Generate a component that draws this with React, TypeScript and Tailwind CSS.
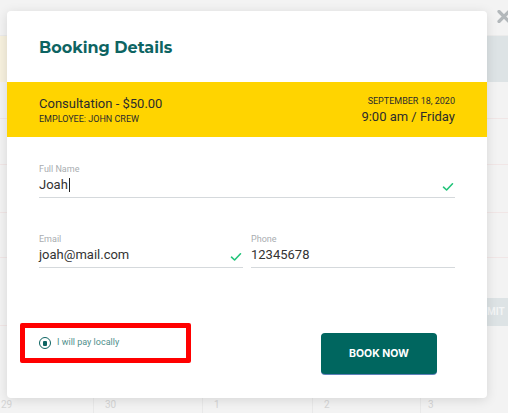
import React from 'react';

function Check() {
  return (
    <svg width="12" height="10" viewBox="0 0 12 10" fill="none" className="shrink-0 mt-[4px]">
      <path d="M1.5 5.2 4.6 8 10.5 1.8" stroke="#22c47a" strokeWidth="1.6" strokeLinecap="round" strokeLinejoin="round" />
    </svg>
  );
}

function Field({ label, value, check, caret }: { label: string; value: string; check?: boolean; caret?: boolean }) {
  return (
    <div className="flex flex-col flex-1 min-w-0">
      <span className="text-[9px] leading-[11px] text-[#a9adb0]">{label}</span>
      <div className="flex items-center justify-between h-[23px] border-b border-[#d5d9dc] pr-[1px] pb-[2px]">
        <span className="text-[13px] text-[#333] flex items-center">
          {value}
          {caret && <span className="inline-block w-[1px] h-[14px] bg-[#222] ml-[1px]" />}
        </span>
        {check && <Check />}
      </div>
    </div>
  );
}

export default function App() {
  return (
    <div className="relative w-[508px] h-[413px] overflow-hidden bg-[#f3f3f3]" style={{ fontFamily: 'Roboto, "Noto Sans", sans-serif' }}>
      {/* Page behind the modal, faded */}
      <div className="flex flex-col h-full">
        <div className="h-[36px] border-b border-[#ebebeb]" />
        <div className="h-[46px] flex">
          <div className="w-[7px] bg-[#f7f1de]" />
          <div className="flex-1" />
          <div className="w-[21px] bg-[#dde3e5]" />
        </div>
        <div className="flex-1 flex flex-col">
          <div className="h-[37px] border-b border-[#f1e6e6]" />
          <div className="h-[46px] border-b border-[#f1e6e6]" />
          <div className="h-[48px] border-b border-[#f1e6e6]" />
          <div className="h-[45px] border-b border-[#f1e6e6]" />
          <div className="h-[40px]" />
          <div className="h-[28px] border-b border-[#f1e6e6] flex justify-end items-center">
            <div className="w-[21px] h-[28px] bg-[#dde3e5] text-[#f3f5f6] text-[10px] font-bold flex items-center">MIT</div>
          </div>
          <div className="flex-1" />
        </div>
        <div className="h-[22px] flex text-[#d5d5d5] text-[10px]">
          <div className="w-[94px] border-r border-[#e9e9e9] pl-[1px] pt-[6px]">29</div>
          <div className="w-[109px] border-r border-[#e9e9e9] pl-[11px] pt-[6px]">30</div>
          <div className="w-[110px] border-r border-[#e9e9e9] pl-[11px] pt-[6px]">1</div>
          <div className="w-[108px] border-r border-[#e9e9e9] pl-[11px] pt-[6px]">2</div>
          <div className="flex-1 pl-[7px] pt-[6px]">3</div>
        </div>
      </div>

      {/* close button */}
      <svg className="absolute left-[497px] top-[10px]" width="14" height="13" viewBox="0 0 14 13" fill="none">
        <path d="M2 1.5 12 11.5M12 1.5 2 11.5" stroke="#b3b8bb" strokeWidth="3.2" strokeLinecap="round" />
      </svg>

      {/* Modal */}
      <div className="absolute left-[7px] top-[11px] w-[480px] h-[387px] bg-white rounded-[4px] shadow-[0_2px_12px_rgba(0,0,0,0.12)] flex flex-col">
        <div className="h-[71px] pl-[32px] pt-[25px]">
          <h2 className="text-[16px] font-bold text-[#0d6462]" style={{ fontFamily: 'Montserrat, "Open Sans", sans-serif' }}>Booking Details</h2>
        </div>
        <div className="h-[55px] bg-[#ffd400] px-[32px] flex items-center justify-between text-[#2c2c2c]">
          <div className="flex flex-col">
            <span className="text-[13px] leading-[17px]">Consultation - $50.00</span>
            <span className="text-[9px] leading-[12px] mt-[1px]">EMPLOYEE: JOHN CREW</span>
          </div>
          <div className="flex flex-col items-end">
            <span className="text-[9px] leading-[12px]">SEPTEMBER 18, 2020</span>
            <span className="text-[13px] leading-[17px] mt-[1px]">9:00 am / Friday</span>
          </div>
        </div>
        <div className="px-[32px] pt-[27px] flex flex-col gap-[36px]">
          <Field label="Full Name" value="Joah" check caret />
          <div className="flex gap-[8px]">
            <Field label="Email" value="joah@mail.com" check />
            <Field label="Phone" value="12345678" />
          </div>
        </div>
        <div className="flex-1 flex items-start justify-between pl-[13px] pr-[50px] pt-[55px]">
          <div className="w-[171px] h-[40px] border-[5px] border-[#ff0000] rounded-[2px] flex items-center pl-[14px] gap-[6px]">
            <span className="w-[12px] h-[12px] rounded-full border-[1.5px] border-[#0d6462] flex items-center justify-center">
              <span className="w-[4px] h-[5px] bg-[#0d6462] rounded-[1px]" />
            </span>
            <span className="text-[9px] text-[#4f8f8c]">I will pay locally</span>
          </div>
          <button className="mt-[10px] w-[116px] h-[41px] bg-[#00665f] rounded-[4px] text-white text-[10.5px] font-bold shadow-[0_1px_0_#5d7fb8]" style={{ fontFamily: 'Inter, sans-serif' }}>
            BOOK NOW
          </button>
        </div>
      </div>
    </div>
  );
}
